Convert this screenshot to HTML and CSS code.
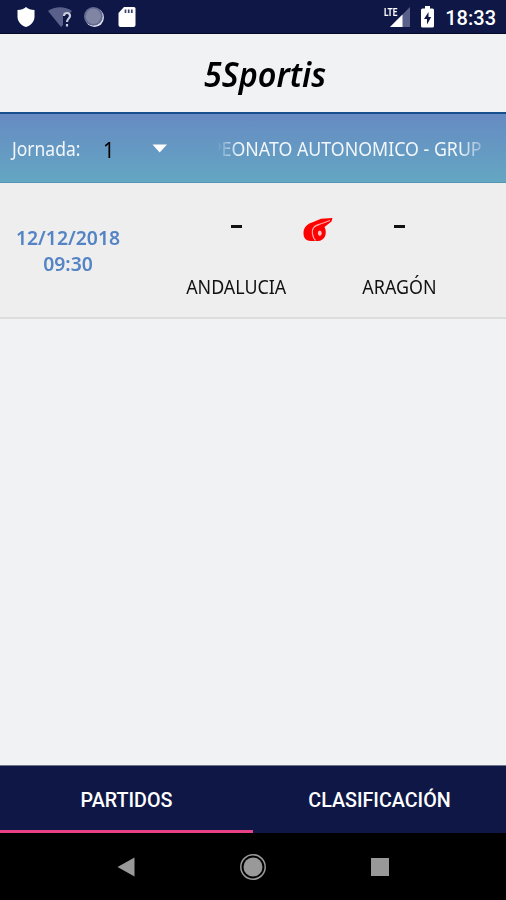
FILE: index.html
```html
<!DOCTYPE html>
<html lang="es">
<head>
  <meta charset="UTF-8">
  <meta name="viewport" content="width=device-width, initial-scale=1.0">
  <title>5Sportis</title>
  <link rel="stylesheet" href="styles.css">
</head>
<body>
  <div class="status-bar">
    <div class="status-left">
      <svg width="20" height="22" viewBox="0 0 20 22"><path d="M10 1 C12 3 15 4 18.500 4 V11 C18.500 16 14 20 10 21 C6 20 1.500 16 1.500 11 V4 C5 4 8 3 10 1Z" fill="#fff"/></svg>
      <svg width="24" height="22" viewBox="0 0 24 22">
        <path d="M0 5 C7 0 17 0 24 5 L21 8 H15 V19 L13 21Z" fill="#59618a"/>
        <path d="M16 10 C16 6 22 6 22 10 C22 12 19 13 19 16 M19 18 V20.500" fill="none" stroke="#c9cddd" stroke-width="2.200"/>
      </svg>
      <svg width="20" height="22" viewBox="0 0 20 22">
        <circle cx="10.500" cy="11.500" r="9.400" fill="#e5e7f0"/>
        <circle cx="9.400" cy="10.400" r="9.400" fill="#646b92"/>
        <circle cx="9.400" cy="10.400" r="7.600" fill="#7f85a3"/>
      </svg>
      <svg class="sd-card" width="18" height="22" viewBox="0 0 18 22">
        <path d="M6 1 H16 Q17.500 1 17.500 2.500 V19 Q17.500 21 15.500 21 H2.500 Q.500 21 .500 19 V7Z" fill="#fff"/>
        <path d="M7.500 3.500 V7 M10.700 3.500 V7 M13.800 3.500 V7" stroke="#3a4268" stroke-width="1.700"/>
      </svg>
    </div>
    <div class="status-right">
      <div class="signal">
        <svg width="20" height="20" viewBox="0 0 20 20">
          <path d="M20 0 V20 H0Z" fill="#59618a"/>
          <path d="M12.500 7.500 V20 H0Z" fill="#fff"/>
        </svg>
        <span class="lte">LTE</span>
      </div>
      <svg width="13" height="22" viewBox="0 0 13 22">
        <path d="M4 0 H9 V2.500 H11.500 Q13 2.500 13 4 V20 Q13 21.500 11.500 21.500 H1.500 Q0 21.500 0 20 V4 Q0 2.500 1.500 2.500 H4Z" fill="#fff"/>
        <path d="M7.500 6 L3 13 H6 V18.500 L10.200 11 H7.500Z" fill="#101747"/>
      </svg>
      <span class="clock">18:33</span>
    </div>
  </div>

  <header class="title-bar">
    <h1 class="title">5Sportis</h1>
  </header>

  <div class="filter-bar">
    <span class="round-label">Jornada:</span>
    <span class="round-value">1</span>
    <svg width="16" height="9" viewBox="0 0 16 9"><path d="M.500 .500 H15 L7.700 8.500Z" fill="#fff"/></svg>
    <div class="marquee"><span class="marquee-text">PEONATO AUTONOMICO - GRUP</span></div>
  </div>

  <main class="matches">
    <div class="match">
      <div class="date">
        <span>12/12/2018</span>
        <span>09:30</span>
      </div>
      <div class="team">
        <span class="score"></span>
        <span class="name">ANDALUCIA</span>
      </div>
      <svg class="whistle" width="32" height="26" viewBox="0 0 32 26">
        <path d="M1.500 16 C1.500 10 6 6.500 10 5.500 L19 1.800 L30.500 1 L29.500 4.500 L22.500 10 C26 17 22 24 16 24 H9 C3 24 1.500 20 1.500 16Z" fill="#f00"/>
        <path d="M28 3.500 L17 7.500 C11 9 9.500 12 10.500 17 C11 20 12 22 13.500 23.500" fill="none" stroke="#ffa8a8" stroke-width="1.300"/>
        <ellipse cx="17.800" cy="16.200" rx="1.900" ry="2.700" fill="#f7c4c4"/>
      </svg>
      <div class="team">
        <span class="score"></span>
        <span class="name">ARAGÓN</span>
      </div>
    </div>
  </main>

  <nav class="tabs">
    <div class="tab active">PARTIDOS</div>
    <div class="tab">CLASIFICACIÓN</div>
  </nav>

  <div class="nav-bar">
    <svg width="18" height="20" viewBox="0 0 18 20"><path d="M0.500 10 L17.500 .500 V19.500Z" fill="#999"/></svg>
    <svg width="26" height="26" viewBox="0 0 26 26">
      <circle cx="13" cy="13" r="12.200" fill="none" stroke="#999" stroke-width="1.500"/>
      <circle cx="13" cy="13" r="9.500" fill="#999"/>
    </svg>
    <svg width="18" height="18" viewBox="0 0 18 18"><rect width="18" height="18" fill="#999"/></svg>
  </div>
</body>
</html>
```

FILE: styles.css
```css
* {
  box-sizing: border-box;
}
body {
  margin: 0;
  height: 900px;
  display: flex;
  flex-direction: column;
  overflow: hidden;
  background-color: #f0f2f4;
  font-family: "Noto Sans", "Open Sans", sans-serif;
  color: #111;
}
svg {
  display: block;
  flex: none;
}
span {
  white-space: nowrap;
}
.status-bar {
  height: 34px;
  display: flex;
  justify-content: space-between;
  align-items: center;
  padding: 0 10px 0 16px;
  background-color: #0e1746;
  border-bottom: 1px solid #050a28;
}
.status-left {
  display: flex;
  gap: 12px;
}
.sd-card {
  margin-left: 2px;
}
.status-right {
  display: flex;
  align-items: center;
  gap: 11px;
}
.signal {
  position: relative;
}
.lte {
  position: absolute;
  left: -6px;
  top: -1px;
  font: 700 11.5px/12px Roboto, sans-serif;
  color: #fff;
  transform: scaleX(0.72);
  transform-origin: left;
}
.clock {
  font: 500 20px/22px Roboto, sans-serif;
  color: #fff;
  padding-top: 2px;
}
.title-bar {
  height: 78px;
  display: flex;
  justify-content: center;
  align-items: center;
  padding: 2px 0 0 25px;
}
.title {
  margin: 0;
  font-size: 35px;
  font-weight: 600;
  font-style: italic;
  line-height: 40px;
  color: #000;
  transform: scaleX(0.925);
}
.filter-bar {
  height: 71px;
  display: flex;
  align-items: center;
  padding: 1px 0 0 12px;
  background: linear-gradient(#668bc3, #64a6c2);
  border-top: 2px solid #174f8c;
  border-bottom: 1px solid #5295b3;
  color: #f2f7fb;
  font-size: 19px;
}
.round-label {
  width: 91px;
  transform: scaleX(0.92);
  transform-origin: left;
}
.round-value {
  width: 49px;
  font-size: 22px;
  color: #000;
  transform: scaleX(0.92);
  transform-origin: left;
}
.marquee {
  width: 265px;
  margin-left: 49px;
  overflow: hidden;
  display: flex;
  justify-content: flex-end;
  -webkit-mask-image: linear-gradient(to right, transparent, #000 22px, #000 243px, transparent 275px);
  mask-image: linear-gradient(to right, transparent, #000 22px, #000 243px, transparent 275px);
}
.marquee-text {
  transform: scaleX(0.935);
  transform-origin: right;
}
.matches {
  flex: 1;
}
.match {
  height: 136px;
  display: flex;
  background-color: #eee;
  border-bottom: 2px solid #dcdcdc;
}
.date {
  width: 136px;
  margin-right: 35px;
  padding-top: 1px;
  display: flex;
  flex-direction: column;
  align-items: center;
  justify-content: center;
  font-size: 19px;
  font-weight: 600;
  line-height: 26px;
  color: #5584c4;
  transform: scaleX(1.02);
}
.team {
  width: 131px;
  display: flex;
  flex-direction: column;
  align-items: center;
}
.score {
  width: 11px;
  height: 3px;
  margin-top: 42px;
  background-color: #111;
}
.name {
  margin-top: 46px;
  font-size: 19px;
  line-height: 26px;
  transform: scaleX(0.94);
}
.whistle {
  margin-top: 34px;
}
.tabs {
  height: 68px;
  display: flex;
  background-color: #0e1746;
  border-top: 1px solid #707489;
}
.tab {
  flex: 1;
  display: flex;
  align-items: center;
  justify-content: center;
  padding-top: 6px;
  border-bottom: 3px solid transparent;
  font: 500 19.7px/24px Roboto, sans-serif;
  color: #fff;
}
.tab.active {
  border-bottom-color: #e84285;
}
.nav-bar {
  height: 67px;
  display: flex;
  align-items: center;
  justify-content: center;
  gap: 105px;
  background-color: #000;
}
```
